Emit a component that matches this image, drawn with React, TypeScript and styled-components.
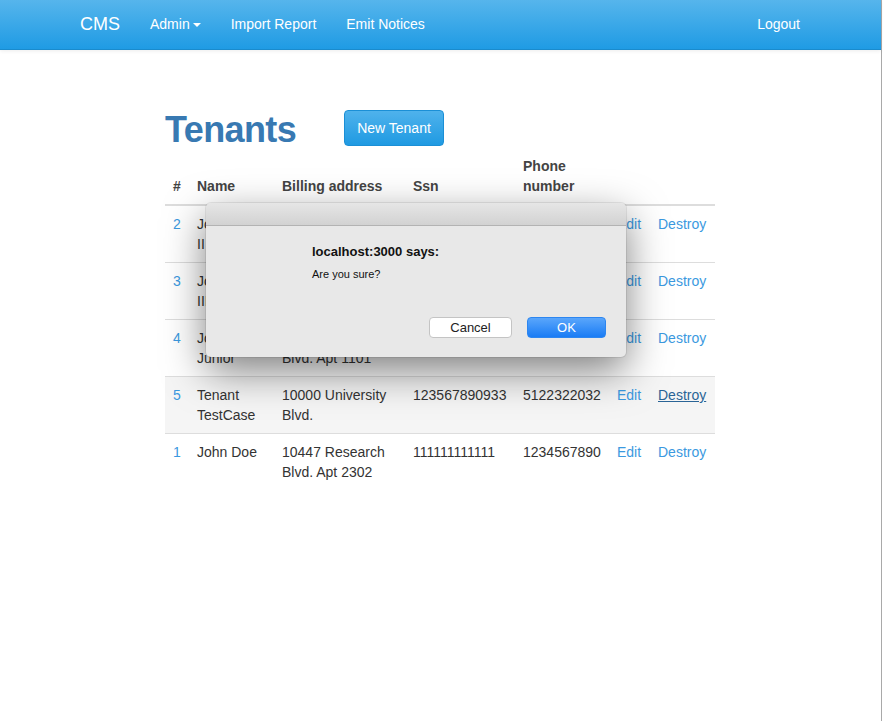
import React from 'react';
import styled, { createGlobalStyle } from 'styled-components';

const GlobalStyle = createGlobalStyle`
  html, body {
    margin: 0;
    padding: 0;
    background: #fff;
  }
  body {
    font-family: "Liberation Sans", Arial, Helvetica, sans-serif;
    font-size: 14px;
    line-height: 20px;
    color: #333;
  }
`;

const Window = styled.div`
  position: relative;
  width: 881px;
  min-height: 721px;
  border-right: 1px solid #a9a9a9;
  background: #fff;
`;

const Navbar = styled.nav`
  height: 49px;
  background: linear-gradient(to bottom, #56b5ec 0%, #1f9be4 100%);
  border-bottom: 1px solid #1a8bcd;
  box-shadow: 0 1px 4px rgba(0, 0, 0, 0.08);
`;

const NavContainer = styled.div`
  width: 750px;
  height: 100%;
  margin-left: 65px;
  display: flex;
  align-items: center;
`;

const Brand = styled.a`
  padding: 0 15px;
  font-size: 18px;
  color: #fff;
  text-decoration: none;
  line-height: 49px;
`;

const NavLinks = styled.div`
  display: flex;
  align-items: center;
  flex: 1;
`;

const NavLink = styled.a`
  padding: 0 15px;
  color: #fff;
  text-decoration: none;
  font-size: 14px;
  line-height: 49px;
  display: flex;
  align-items: center;
`;

const Caret = styled.span`
  display: inline-block;
  width: 0;
  height: 0;
  margin-left: 3px;
  border-top: 4px solid #fff;
  border-left: 4px solid transparent;
  border-right: 4px solid transparent;
`;

const Main = styled.main`
  width: 550px;
  margin-left: 165px;
`;

const TitleRow = styled.div`
  display: flex;
  align-items: center;
  gap: 48px;
  padding-top: 60px;
  margin-bottom: 3px;
`;

const Title = styled.h1`
  margin: 0;
  font-size: 36px;
  line-height: 36px;
  font-weight: 700;
  letter-spacing: -0.6px;
  color: #3879b2;
  position: relative;
  top: 2px;
`;

const PrimaryButton = styled.a`
  display: inline-block;
  height: 36px;
  box-sizing: border-box;
  padding: 0 12px;
  line-height: 34px;
  border: 1px solid #1b8fd6;
  border-radius: 4px;
  background: linear-gradient(to bottom, #4fb2ec 0%, #1f9ae2 100%);
  color: #fff;
  font-size: 14px;
  text-decoration: none;
`;

const Table = styled.table`
  width: 550px;
  border-collapse: collapse;
  table-layout: fixed;
`;

const Th = styled.th<{ w: number }>`
  width: ${p => p.w}px;
  box-sizing: border-box;
  padding: 7px 8px 8px;
  text-align: left;
  vertical-align: bottom;
  font-weight: 700;
  color: #444;
  border-bottom: 2px solid #ddd;
`;

const Row = styled.tr<{ hover?: boolean }>`
  background: ${p => (p.hover ? '#f5f5f5' : 'transparent')};
`;

const Td = styled.td`
  padding: 8px;
  vertical-align: top;
  border-top: 1px solid #ddd;
  color: #333;
`;

const Link = styled.a<{ active?: boolean }>`
  color: ${p => (p.active ? '#2a6496' : '#3b99e0')};
  text-decoration: ${p => (p.active ? 'underline' : 'none')};
`;

const Dialog = styled.div`
  position: absolute;
  left: 206px;
  top: 203px;
  width: 420px;
  height: 154px;
  border-radius: 5px;
  background: #e8e8e8;
  box-shadow: 0 14px 40px rgba(0, 0, 0, 0.5), 0 0 0 1px rgba(0, 0, 0, 0.08);
  overflow: hidden;
  display: flex;
  flex-direction: column;
  font-family: "Liberation Sans", Arial, sans-serif;
`;

const DialogBar = styled.div`
  height: 22px;
  background: linear-gradient(to bottom, #e6e6e6 0%, #d2d2d2 100%);
  border-bottom: 1px solid #b3b3b3;
`;

const DialogBody = styled.div`
  flex: 1;
  display: flex;
  flex-direction: column;
  padding: 17px 20px 19px 106px;
`;

const DialogTitle = styled.div`
  font-size: 13px;
  font-weight: 700;
  color: #111;
  line-height: 18px;
`;

const DialogText = styled.div`
  margin-top: 6px;
  font-size: 11px;
  color: #111;
  line-height: 14px;
`;

const DialogActions = styled.div`
  margin-top: auto;
  display: flex;
  justify-content: flex-end;
  gap: 15px;
`;

const DialogButton = styled.button<{ primary?: boolean; w: number }>`
  width: ${p => p.w}px;
  height: 21px;
  padding: 0;
  border-radius: 4px;
  font-family: "Liberation Sans", Arial, sans-serif;
  font-size: 13px;
  border: 1px solid ${p => (p.primary ? '#2d86f0' : '#c4c4c4')};
  background: ${p => (p.primary ? 'linear-gradient(to bottom, #5aa6fb 0%, #1a7cf5 100%)' : '#fff')};
  color: ${p => (p.primary ? '#fff' : '#222')};
`;

const cols = [24, 85, 131, 110, 94, 41, 65];

const tenants = [
  { id: 2, name: 'John Doe II', address: '10447 Research Blvd. Apt 2302', ssn: '222222222222', phone: '1234567890' },
  { id: 3, name: 'John Doe III', address: '10447 Research Blvd. Apt 2302', ssn: '333333333333', phone: '1234567890' },
  { id: 4, name: 'John Doe Junior', address: '10447 Research Blvd. Apt 1101', ssn: '444444444444', phone: '1234567890' },
  { id: 5, name: 'Tenant TestCase', address: '10000 University Blvd.', ssn: '123567890933', phone: '5122322032', hover: true },
  { id: 1, name: 'John Doe', address: '10447 Research Blvd. Apt 2302', ssn: '111111111111', phone: '1234567890' },
];

export default function App() {
  return (
    <Window>
      <GlobalStyle />
      <Navbar>
        <NavContainer>
          <Brand href="#">CMS</Brand>
          <NavLinks>
            <NavLink href="#">Admin<Caret /></NavLink>
            <NavLink href="#">Import Report</NavLink>
            <NavLink href="#">Emit Notices</NavLink>
          </NavLinks>
          <NavLink href="#">Logout</NavLink>
        </NavContainer>
      </Navbar>

      <Main>
        <TitleRow>
          <Title>Tenants</Title>
          <PrimaryButton href="#">New Tenant</PrimaryButton>
        </TitleRow>

        <Table>
          <thead>
            <tr>
              <Th w={cols[0]}>#</Th>
              <Th w={cols[1]}>Name</Th>
              <Th w={cols[2]}>Billing address</Th>
              <Th w={cols[3]}>Ssn</Th>
              <Th w={cols[4]}>Phone number</Th>
              <Th w={cols[5]}></Th>
              <Th w={cols[6]}></Th>
            </tr>
          </thead>
          <tbody>
            {tenants.map(t => (
              <Row key={t.id} hover={t.hover}>
                <Td><Link href="#">{t.id}</Link></Td>
                <Td>{t.name}</Td>
                <Td>{t.address}</Td>
                <Td>{t.ssn}</Td>
                <Td>{t.phone}</Td>
                <Td><Link href="#">Edit</Link></Td>
                <Td><Link href="#" active={t.hover}>Destroy</Link></Td>
              </Row>
            ))}
          </tbody>
        </Table>
      </Main>

      <Dialog>
        <DialogBar />
        <DialogBody>
          <DialogTitle>localhost:3000 says:</DialogTitle>
          <DialogText>Are you sure?</DialogText>
          <DialogActions>
            <DialogButton w={83}>Cancel</DialogButton>
            <DialogButton w={79} primary>OK</DialogButton>
          </DialogActions>
        </DialogBody>
      </Dialog>
    </Window>
  );
}
